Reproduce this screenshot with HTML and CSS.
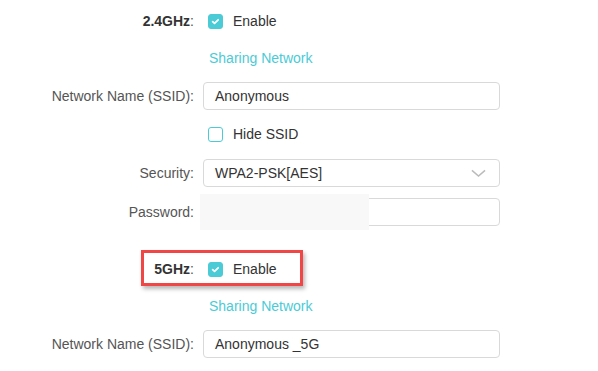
FILE: index.html
```html
<html>
<head>
<meta name="viewport" content="width=device-width, initial-scale=1" />
<title>Wireless Settings</title>
<link rel="stylesheet" href="styles.css">
</head>
<body>

<div class="wireless">

    <div class="row band">
        <label class="lbl"><b>2.4GHz</b>:</label>
        <div class="ctl"><span class="check on"><svg viewBox="0 0 15 15"><path d="M4.2 7.6l2.2 2.1 4.2-4.2" /></svg></span><span class="check-text">Enable</span></div>
    </div>

    <div class="row">
        <span class="lbl"></span>
        <div class="ctl"><a class="link">Sharing Network</a></div>
    </div>

    <div class="row">
        <label class="lbl">Network Name (SSID):</label>
        <div class="ctl"><div class="field">Anonymous</div></div>
    </div>

    <div class="row hide">
        <span class="lbl"></span>
        <div class="ctl"><span class="check"></span><span class="check-text">Hide SSID</span></div>
    </div>

    <div class="row sec">
        <label class="lbl">Security:</label>
        <div class="ctl"><div class="field select">WPA2-PSK[AES]<svg class="chev" viewBox="0 0 16 9"><path d="M1 1.2l7 6 7-6" /></svg></div></div>
    </div>

    <div class="row sec">
        <label class="lbl">Password:</label>
        <div class="ctl"><div class="field"></div><span class="mask"></span></div>
    </div>

    <div class="row band five">
        <label class="lbl"><b>5GHz</b>:</label>
        <div class="ctl"><span class="check on"><svg viewBox="0 0 15 15"><path d="M4.2 7.6l2.2 2.1 4.2-4.2" /></svg></span><span class="check-text">Enable</span></div>
        <span class="mark"></span>
    </div>

    <div class="row share2">
        <span class="lbl"></span>
        <div class="ctl"><a class="link">Sharing Network</a></div>
    </div>

    <div class="row ssid2">
        <label class="lbl">Network Name (SSID):</label>
        <div class="ctl"><div class="field">Anonymous _5G</div></div>
    </div>

</div>

</body>
</html>
```

FILE: styles.css
```css
body { margin: 0; background: #fff; font-family: "Liberation Sans", Arial, sans-serif; font-size: 14px; color: #555; }

.wireless { display: flex; flex-direction: column; gap: 10px; padding-top: 7px; }

.row { position: relative; display: grid; grid-template-columns: 194px 297px; column-gap: 9px; height: 28px; align-items: center; }
.row.band + .row { margin-top: -1px; }
.row.share2 + .row { margin-top: 0; }
.row.hide { margin-top: 0; }
.row.sec { margin-top: 1px; }
.row.hide + .row.sec { margin-top: 1px; }
.row.five { margin-top: 19px; }

.lbl { text-align: right; color: #555; }
.lbl b { color: #333; }

.ctl { position: relative; display: flex; align-items: center; height: 28px; }

.check { width: 13px; height: 13px; margin-left: 5px; border: 1px solid #4acbd6; border-radius: 3px; background: #fff; }
.check.on { background: #4acbd6; }
.check svg { display: block; width: 13px; height: 13px; margin: 0; }
.check svg path { fill: none; stroke: #fff; stroke-width: 2; stroke-linecap: round; stroke-linejoin: round; }
.check-text { margin-left: 10px; color: #333; }

.link { margin-left: 6px; color: #4acbd6; }

.field { box-sizing: border-box; width: 297px; height: 28px; border: 1px solid #d9d9d9; border-radius: 4px; padding: 0 11px; line-height: 26px; color: #333; }
.field.select { display: flex; justify-content: space-between; align-items: center; }
.chev { width: 15px; height: 9px; margin-right: 2px; }
.chev path { fill: none; stroke: #bbb; stroke-width: 1.6; }

.mask { position: absolute; left: -3px; top: -4px; width: 169px; height: 36px; background: #f8f8f8; }

.mark { position: absolute; left: 141px; top: -5px; width: 156px; height: 30px; border: 3px solid #f04646; box-shadow: 2px 3px 4px rgba(0, 0, 0, 0.28); }
```
